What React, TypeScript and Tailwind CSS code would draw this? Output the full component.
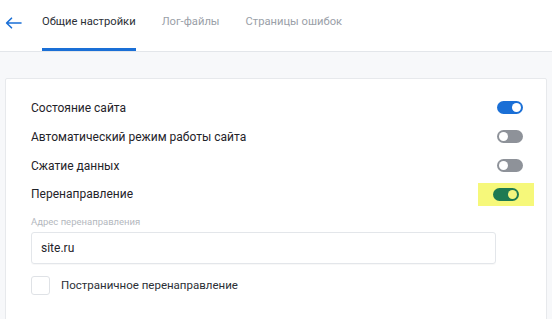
import React from 'react'

const font = { fontFamily: 'Roboto, "Liberation Sans", sans-serif' }

function Toggle({ on, color = 'bg-[#1a6fd6]', knob = 'bg-white' }: { on: boolean; color?: string; knob?: string }) {
  return (
    <div
      className={`w-[26px] h-[13px] rounded-full flex items-center px-[2px] ${on ? color + ' justify-end' : 'bg-[#8e9299] justify-start'}`}
    >
      <div className={`w-[9px] h-[9px] rounded-full ${on ? knob : 'bg-white'}`} />
    </div>
  )
}

export default function App() {
  const tabs = ['Общие настройки', 'Лог-файлы', 'Страницы ошибок']

  return (
    <div className="w-[552px] h-[319px] bg-[#f7f8fa] overflow-hidden" style={font}>
      {/* Header */}
      <div className="h-[52px] bg-white border-b border-[#e3e6ea] flex items-stretch">
        <div className="w-[42px] flex items-center pl-[5px] pb-[6px]">
          <svg width="17" height="12" viewBox="0 0 17 12" fill="none">
            <path d="M16 6H2M6.5 1.2L1.6 6l4.9 4.8" stroke="#1a6fd6" strokeWidth="1.6" strokeLinecap="round" strokeLinejoin="round" />
          </svg>
        </div>
        {tabs.map((t, i) => (
          <div
            key={t}
            className={`flex items-center pb-[4px] mr-[26px] text-[11.2px] border-b-[3px] ${
              i === 0 ? 'text-[#2b2f36] border-[#1a6fd6]' : 'text-[#9aa0a8] border-transparent'
            }`}
          >
            {t}
          </div>
        ))}
      </div>

      {/* Card */}
      <div className="mt-[26px] ml-[5px] w-[542px] h-[260px] bg-white border border-[#e7e9ec] rounded-[2px] pt-[14px] pl-[25px] pr-[23px]">
        {[
          { label: 'Состояние сайта', on: true },
          { label: 'Автоматический режим работы сайта', on: false },
          { label: 'Сжатие данных', on: false },
        ].map((r) => (
          <div key={r.label} className="h-[29px] flex items-center justify-between text-[12px] text-[#1f2329]">
            <span>{r.label}</span>
            <Toggle on={r.on} />
          </div>
        ))}
        <div className="h-[28px] flex items-center justify-between text-[12px] text-[#1f2329]">
          <span>Перенаправление</span>
          <div className="w-[56px] h-[23px] bg-[#f6f87a] flex items-center justify-center mr-[-11px]">
            <Toggle on color="bg-[#1e7a52]" knob="bg-[#f3f57e]" />
          </div>
        </div>

        <div className="mt-[7px] text-[9.5px] text-[#b4b8be]">Адрес перенаправления</div>
        <div className="mt-[3px] w-[465px] h-[32px] border border-[#e3e6ea] rounded-[3px] flex items-center px-[9px] text-[12px] text-[#1f2329] shadow-[0_1px_1px_rgba(0,0,0,0.03)]">
          site.ru
        </div>
        <div className="mt-[12px] flex items-center">
          <div className="w-[19px] h-[19px] border border-[#dfe2e6] rounded-[3px]" />
          <span className="ml-[11px] text-[11.5px] text-[#2b2f36]">Постраничное перенаправление</span>
        </div>
      </div>
    </div>
  )
}
